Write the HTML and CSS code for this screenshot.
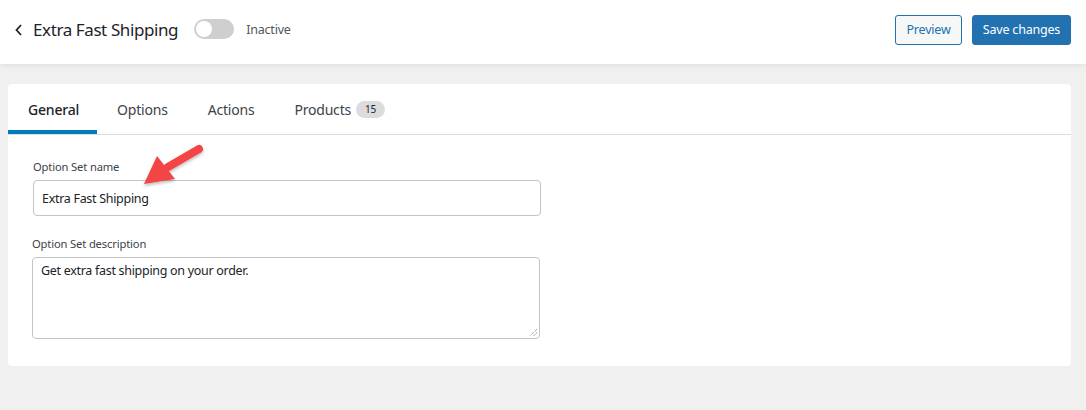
FILE: index.html
```html
<!DOCTYPE html>
<html>
<head>
<meta charset="utf-8">
<link rel="stylesheet" href="styles.css">
</head>
<body>
<header class="topbar">
  <div class="title-group">
    <svg class="back" width="10" height="14" viewBox="0 0 10 14"><path d="M7 2 L2.5 7 L7 12" fill="none" stroke="#1d2327" stroke-width="1.8"/></svg>
    <h1 class="title">Extra Fast Shipping</h1>
    <span class="toggle"><span class="knob"></span></span>
    <span class="status">Inactive</span>
  </div>
  <div class="actions">
    <button class="btn btn-secondary">Preview</button>
    <button class="btn btn-primary">Save changes</button>
  </div>
</header>
<main class="page">
  <section class="card">
    <nav class="tabs">
      <div class="tab active">General</div>
      <div class="tab">Options</div>
      <div class="tab">Actions</div>
      <div class="tab">Products <span class="badge">15</span></div>
    </nav>
    <div class="form">
      <div class="field">
        <label class="label">Option Set name</label>
        <div class="input">Extra Fast Shipping</div>
      </div>
      <div class="field field-desc">
        <label class="label">Option Set description</label>
        <div class="textarea">Get extra fast shipping on your order.
          <svg class="grip" width="9" height="9" viewBox="0 0 9 9"><path d="M8 1 L1 8 M8 4.5 L4.5 8" stroke="#777" stroke-width="1" stroke-dasharray="1 1"/></svg>
        </div>
      </div>
      <svg class="arrow" width="80" height="60" viewBox="0 0 80 60">
        <defs><filter id="sh" x="-30%" y="-30%" width="160%" height="160%"><feDropShadow dx="0" dy="2" stdDeviation="1.5" flood-color="#000" flood-opacity="0.25"/></filter></defs>
        <g filter="url(#sh)">
          <line x1="61" y1="9" x2="30" y2="27" stroke="#f34545" stroke-width="8" stroke-linecap="round"/>
          <polygon points="6,44 19,16 37,39" fill="#f34545"/>
        </g>
      </svg>
    </div>
  </section>
</main>
</body>
</html>
```
FILE: styles.css
```css
* { box-sizing: border-box; }
html, body { margin: 0; padding: 0; }
body {
  background: #f0f0f1;
  font-family: "Noto Sans", "Open Sans", sans-serif;
  color: #1d2327;
  width: 1086px;
  height: 410px;
  overflow: hidden;
}
.topbar {
  height: 64px;
  background: #fff;
  display: flex;
  align-items: center;
  justify-content: space-between;
  padding: 0 15px 6px 14px;
  box-shadow: 0 1px 6px rgba(0,0,0,0.08);
  position: relative;
}
.title-group { display: flex; align-items: center; }
.back { margin-right: 9px; margin-top: 1px; }
.title {
  font-size: 17px;
  font-weight: 400;
  margin: 0 16px 0 0;
  letter-spacing: -0.4px;
  color: #1d2327;
}
.toggle {
  width: 40px; height: 20px;
  border-radius: 10px;
  background: #cfcfcf;
  display: inline-flex;
  align-items: center;
  padding-left: 2px;
}
.knob {
  width: 16px; height: 16px;
  border-radius: 50%;
  background: #fff;
}
.status { font-size: 12.5px; color: #50575e; margin-left: 12px; letter-spacing: -0.2px; }
.actions { display: flex; gap: 10px; margin-top: 1px; }
.btn {
  font-family: inherit;
  font-size: 12.5px;
  height: 30px;
  border-radius: 3px;
  padding: 0;
  letter-spacing: -0.2px;
  white-space: nowrap;
  cursor: pointer;
}
.btn-secondary { background: #f6f7f7; border: 1px solid #2271b1; color: #2271b1; width: 67px; }
.btn-primary { background: #2271b1; border: 1px solid #2271b1; color: #fff; width: 99px; }
.page { padding: 20px 15px 0 8px; }
.card {
  background: #fff;
  border-radius: 4px;
  height: 282px;
}
.tabs {
  display: flex;
  height: 51px;
  border-bottom: 1px solid #dcdcde;
}
.tab {
  font-size: 14px;
  color: #3c434a;
  display: flex;
  align-items: center;
  padding: 4px 20px 0;
  height: 50px;
  letter-spacing: -0.2px;
  border-bottom: 4px solid transparent;
}
.tab:first-child { width: 89px; }
.tab.active { color: #1d2327; font-weight: 500; border-bottom-color: #007cba; }
.badge {
  display: inline-flex;
  align-items: center;
  justify-content: center;
  background: #dcdcde;
  border-radius: 9px;
  font-size: 10px;
  height: 17px;
  padding: 0 9px;
  margin-left: 5px;
  color: #1d2327;
}
.form { padding: 25px 0 0 25px; position: relative; }
.field { display: flex; flex-direction: column; width: 508px; }
.field-desc { margin-top: 21px; margin-left: -1px; }
.label { font-size: 11.2px; color: #3c434a; margin-bottom: 6px; letter-spacing: -0.15px; line-height: 14px; }
.input {
  height: 36px;
  border: 1px solid #c3c4c7;
  border-radius: 4px;
  font-size: 12.5px;
  padding: 0 8px;
  display: flex;
  align-items: center;
  letter-spacing: -0.3px;
}
.textarea {
  height: 82px;
  border: 1px solid #c3c4c7;
  border-radius: 4px;
  font-size: 12.5px;
  padding: 4px 8px;
  letter-spacing: -0.3px;
  position: relative;
}
.grip { position: absolute; right: 1px; bottom: 1px; }
.arrow { position: absolute; left: 130px; top: 5px; }
```
